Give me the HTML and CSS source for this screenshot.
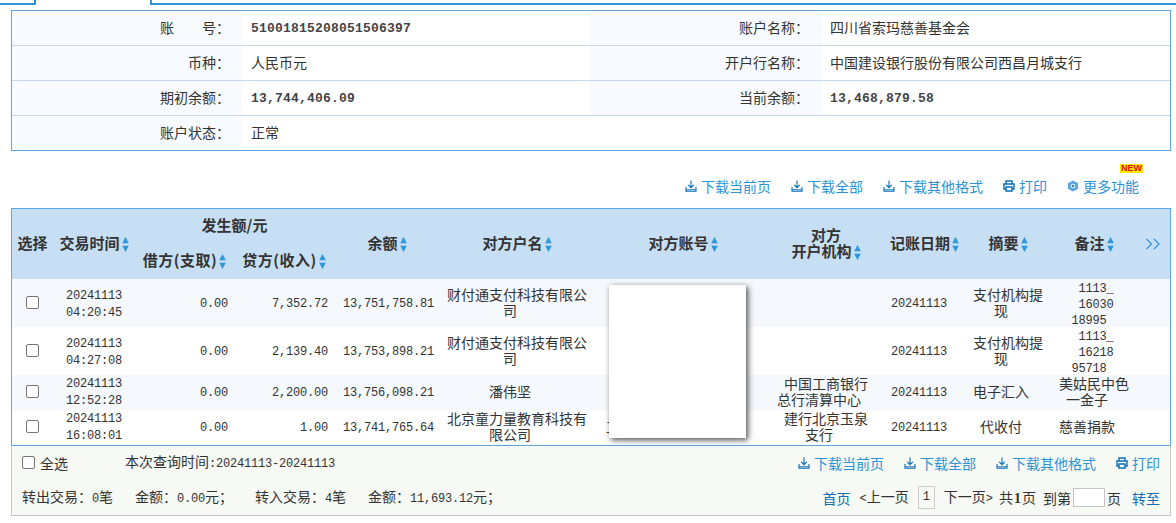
FILE: index.html
```html
<!DOCTYPE html>
<html lang="zh-CN">
<head>
<meta charset="utf-8">
<title>账户明细</title>
<link rel="stylesheet" href="styles.css">
</head>
<body>
<svg class="defs" width="0" height="0" aria-hidden="true">
  <symbol id="dl" viewBox="0 0 12 12"><path d="M6 .5v7M3.200 4.800 6 7.600l2.800-2.800M1 7v4.200h10V7" fill="none" stroke="#0a6db5" stroke-width="1.100"/><path d="M1 9.800h10" stroke="#0a6db5" stroke-width="1"/></symbol>
  <symbol id="pr" viewBox="0 0 12 12"><path d="M3 4V1h6v3M3 9H1V4h10v5H9M3 7h6v4H3z" fill="none" stroke="#0a6db5" stroke-width="1.400"/></symbol>
  <symbol id="gear" viewBox="0 0 12 12"><path d="M6 .5 11 3.200v5.600L6 11.500 1 8.800V3.200z" fill="#5aa5e0"/><circle cx="6" cy="6" r="2.300" fill="#e8f3fb"/><circle cx="6" cy="6" r="1.200" fill="#2a7fc0"/></symbol>
  <symbol id="sort" viewBox="0 0 7 15"><path d="M3.500 0 6.800 6.300H.2zM.2 8.700h6.600L3.500 15z" fill="#2e96dc"/></symbol>
  <symbol id="more" viewBox="0 0 16 12"><path d="M1.500 1 6.500 6l-5 5M9 1l5 5-5 5" fill="none" stroke="#2e96dc" stroke-width="1.200"/></symbol>
</svg>

<div class="tabs"><div class="tab-a"></div><div class="tab-on"></div><div class="tab-b"></div></div>

<div class="info">
  <div class="info-row">
    <div class="k">账&emsp;&emsp;号：</div><div class="v num">51001815208051506397</div>
    <div class="k k2">账户名称：</div><div class="v">四川省索玛慈善基金会</div>
  </div>
  <div class="info-row">
    <div class="k">币种：</div><div class="v">人民币元</div>
    <div class="k k2">开户行名称：</div><div class="v">中国建设银行股份有限公司西昌月城支行</div>
  </div>
  <div class="info-row">
    <div class="k">期初余额：</div><div class="v num">13,744,406.09</div>
    <div class="k k2">当前余额：</div><div class="v num">13,468,879.58</div>
  </div>
  <div class="info-row last">
    <div class="k">账户状态：</div><div class="v">正常</div>
    <div class="blank"></div>
  </div>
</div>

<div class="actions top">
  <a class="act"><svg class="ic"><use href="#dl"/></svg>下载当前页</a>
  <a class="act"><svg class="ic"><use href="#dl"/></svg>下载全部</a>
  <a class="act"><svg class="ic"><use href="#dl"/></svg>下载其他格式</a>
  <a class="act"><svg class="ic"><use href="#pr"/></svg>打印</a>
  <a class="act more"><svg class="ic"><use href="#gear"/></svg>更多功能<span class="new">NEW</span></a>
</div>

<div class="panel">
  <table class="grid">
    <colgroup>
      <col class="c1"><col class="c2"><col class="c3"><col class="c4"><col class="c5"><col class="c6"><col class="c7"><col class="c8"><col class="c9"><col class="c10"><col class="c11"><col class="c12">
    </colgroup>
    <thead>
      <tr class="h1">
        <th rowspan="2">选择</th>
        <th rowspan="2">交易时间<svg class="s"><use href="#sort"/></svg></th>
        <th colspan="2">发生额/元</th>
        <th rowspan="2">余额<svg class="s"><use href="#sort"/></svg></th>
        <th rowspan="2">对方户名<svg class="s"><use href="#sort"/></svg></th>
        <th rowspan="2">对方账号<svg class="s"><use href="#sort"/></svg></th>
        <th rowspan="2" class="stack">对方<br>开户机构<svg class="s"><use href="#sort"/></svg></th>
        <th rowspan="2" class="date-h">记账日期<svg class="s"><use href="#sort"/></svg></th>
        <th rowspan="2">摘要<svg class="s"><use href="#sort"/></svg></th>
        <th rowspan="2">备注<svg class="s"><use href="#sort"/></svg></th>
        <th rowspan="2" class="chev"><svg class="mr"><use href="#more"/></svg></th>
      </tr>
      <tr class="h2">
        <th class="amt">借方(支取)<svg class="s"><use href="#sort"/></svg></th>
        <th class="amt">贷方(收入)<svg class="s"><use href="#sort"/></svg></th>
      </tr>
    </thead>
    <tbody>
      <tr class="tall alt">
        <td class="pick"><span class="cb"></span></td>
        <td class="mono dt">20241113<br>04:20:45</td>
        <td class="mono r">0.00</td><td class="mono r">7,352.72</td><td class="mono r">13,751,758.81</td>
        <td class="wrap">财付通支付科技有限公司<span class="tail"></span></td><td></td><td></td>
        <td class="mono">20241113</td><td class="wrap2">支付机构提现<span class="tail"></span></td>
        <td class="mono"><div class="note">1113_<br>16030<br>18995&nbsp;&nbsp;</div></td><td></td>
      </tr>
      <tr class="tall">
        <td class="pick"><span class="cb"></span></td>
        <td class="mono dt">20241113<br>04:27:08</td>
        <td class="mono r">0.00</td><td class="mono r">2,139.40</td><td class="mono r">13,753,898.21</td>
        <td class="wrap">财付通支付科技有限公司<span class="tail"></span></td><td></td><td></td>
        <td class="mono">20241113</td><td class="wrap2">支付机构提现<span class="tail"></span></td>
        <td class="mono"><div class="note">1113_<br>16218<br>95718&nbsp;&nbsp;</div></td><td></td>
      </tr>
      <tr class="short alt">
        <td class="pick"><span class="cb"></span></td>
        <td class="mono dt">20241113<br>12:52:28</td>
        <td class="mono r">0.00</td><td class="mono r">2,200.00</td><td class="mono r">13,756,098.21</td>
        <td class="wrap">潘伟坚<span class="tail"></span></td><td></td><td>中国工商银行<br>总行清算中心<span class="tail"></span></td>
        <td class="mono">20241113</td><td class="wrap2">电子汇入<span class="tail"></span></td>
        <td>美姑民中色<br>一金子<span class="tail"></span></td><td></td>
      </tr>
      <tr class="short">
        <td class="pick"><span class="cb"></span></td>
        <td class="mono dt">20241113<br>16:08:01</td>
        <td class="mono r">0.00</td><td class="mono r">1.00</td><td class="mono r">13,741,765.64</td>
        <td class="wrap">北京童力量教育科技有限公司<span class="tail"></span></td><td class="peek">工</td><td>建行北京玉泉<br>支行<span class="tail"></span></td>
        <td class="mono">20241113</td><td class="wrap2">代收付<span class="tail"></span></td>
        <td>慈善捐款<span class="tail"></span></td><td></td>
      </tr>
    </tbody>
  </table>
  <div class="mask"></div>

  <div class="foot">
    <div class="foot-row first">
      <div class="foot-left">
        <label class="all"><span class="cb small"></span>全选</label>
        <span class="range">本次查询时间<span class="mono">:20241113-20241113</span></span>
      </div>
      <div class="actions">
        <a class="act"><svg class="ic"><use href="#dl"/></svg>下载当前页</a>
        <a class="act"><svg class="ic"><use href="#dl"/></svg>下载全部</a>
        <a class="act"><svg class="ic"><use href="#dl"/></svg>下载其他格式</a>
        <a class="act"><svg class="ic"><use href="#pr"/></svg>打印</a>
      </div>
    </div>
    <div class="foot-row second">
      <div class="stats">
        <span>转出交易：<span class="mono">0</span>笔</span>
        <span>金额：<span class="mono">0.00</span>元；</span>
        <span>转入交易：<span class="mono">4</span>笔</span>
        <span>金额：<span class="mono">11,693.12</span>元；</span>
      </div>
      <div class="pager">
        <a class="go">首页</a>
        <span class="prev"><span class="ang">&lt;</span>上一页</span>
        <span class="cur">1</span>
        <span class="next">下一页<span class="ang">&gt;</span></span>
        <span class="total">共<b class="bold1">1</b>页</span>
        <span class="to">到第<span class="inp"></span>页</span>
        <a class="go end">转至</a>
      </div>
    </div>
  </div>
</div>
</body>
</html>
```

FILE: styles.css
```css
* { box-sizing: border-box; }
html, body { margin: 0; padding: 0; }
body {
  width: 1176px;
  height: 523px;
  overflow: hidden;
  background: #fff;
  color: #333;
  font: 14px/16px "Noto Sans CJK SC", "Liberation Sans", sans-serif;
}
.defs { position: absolute; }

.tabs { display: flex; height: 5px; margin-bottom: 5px; }
.tab-a { width: 36px; border-bottom: 2px solid #2b93d9; border-right: 2px solid #2b93d9; }
.tab-on { width: 114px; }
.tab-b { flex: 1; border-bottom: 2px solid #2b93d9; border-left: 2px solid #2b93d9; }

.info { margin: 0 5px 0 11px; border: 1px solid #5aa9e6; height: 141px; }
.info-row { display: flex; height: 35px; border-bottom: 1px solid #c5d9ea; }
.info-row.last { border-bottom: 0; height: 34px; }
.k { width: 229px; flex: none; padding-right: 11px; background: #f7fbff; text-align: right; line-height: 32px; }
.k2 { width: 232px; padding-right: 13px; }
.v { flex: none; width: 349px; padding-left: 10px; line-height: 32px; }
.k2 + .v { width: auto; flex: 1; padding-left: 8px; }
.k2 + .v.num, .v.num { font: bold 13px/36px "Liberation Mono", monospace; letter-spacing: .2px; color: #444; }
.blank { flex: 1; }

.actions { display: flex; gap: 20px; color: #2c93d6; }
.actions.top { justify-content: flex-end; margin: 25px 37px 0 0; height: 20px; }
.act { display: flex; align-items: center; color: #2c93d6; position: relative; white-space: nowrap; line-height: 20px; }
.ic { width: 12px; height: 12px; margin-right: 4px; flex: none; }
.new {
  position: absolute; right: -4px; top: -12px; background: #ffe600; color: #e0120c;
  font: bold 9px/9px "Liberation Sans", sans-serif; padding: 0 1px;
}

.panel { position: relative; margin: 12px 5px 0 11px; border: 1px solid #5aa9e6; border-bottom: 0; }
.grid { width: 100%; border-collapse: collapse; table-layout: fixed; }
.c1 { width: 41px; } .c2 { width: 82px; } .c3 { width: 99px; } .c4 { width: 100px; }
.c5 { width: 106px; } .c6 { width: 154px; } .c7 { width: 178px; } .c8 { width: 108px; }
.c9 { width: 78px; } .c10 { width: 100px; } .c11 { width: 72px; } .c12 { width: 40px; }
.grid th { background: #c7dff5; color: #333; font-weight: 700; font-size: 15px; line-height: 16px; padding: 0 0 2px; text-align: center; white-space: nowrap; }
.grid th.date-h { padding-left: 10px; }
.grid th.amt { letter-spacing: .5px; }
.h1 { height: 34px; } .h2 { height: 36px; }
.grid td { padding: 0 0 3px; text-align: center; vertical-align: middle; color: #333; }
.grid td.wrap { padding: 0 7px 3px; }
.grid td.wrap2 { padding: 0 15px 3px; }
.tail { display: inline-block; width: 14px; }
.grid td.r { text-align: right; padding: 2px 6px 0 0; }
.mono, .grid td.mono { font: 12px/16px "Liberation Mono", monospace; letter-spacing: -.2px; color: #333; padding-top: 1px; padding-bottom: 0; }
.grid td.dt { line-height: 17px; padding: 1px 0 0; }
.grid .tall td.dt { padding-top: 4px; }
.note { padding: 2px 0 0 4px; margin-bottom: -2px; }
.grid td.mono:has(.note) { padding: 0; }
.alt td { background: #f5f9fd; }
.tall { height: 48px; } .short { height: 35px; }
.s { display: inline-block; width: 7px; height: 15px; margin-left: 2px; vertical-align: -3px; }
.mr { display: inline-block; width: 16px; height: 12px; margin-left: 6px; vertical-align: -1px; }
.grid td.peek { text-align: left; padding-left: 12px; }
.grid td.pick { padding-bottom: 5px; }
.cb { display: inline-block; width: 13px; height: 13px; border: 1px solid #767676; border-radius: 2px; background: #fff; vertical-align: middle; }

.mask { position: absolute; left: 597px; top: 76px; width: 137px; height: 153px; background: #fff; box-shadow: 2px 2px 6px rgba(0,0,0,.7); }

.foot { height: 71px; margin: 0 -1px; background: #f6f9f4; border: 1px solid #c4c8c4; border-top-color: #5aa9e6; padding: 0 10px; }
.foot-row { display: flex; justify-content: space-between; align-items: center; }
.first { height: 33px; }
.second { height: 37px; }
.foot-left { display: flex; align-items: center; }
.all { display: flex; align-items: center; gap: 5px; width: 103px; }
.stats { display: flex; gap: 22px; }
.pager { display: flex; align-items: center; }
.go { color: #0a6db5; }
.ang { font: 12px/16px "Liberation Mono", monospace; }
.prev { margin-left: 9px; }
.cur { width: 17px; height: 23px; margin-left: 9px; border: 1px solid #ccc; text-align: center; line-height: 21px; font-family: "Liberation Mono", monospace; font-size: 12px; }
.next { margin-left: 9px; }
.total { margin-left: 6px; }
.bold1 { font: bold 14px/16px "Liberation Serif", serif; margin: 0 1px; }
.to { display: flex; align-items: center; margin-left: 7px; }
.inp { width: 32px; height: 19px; margin: 0 2px; background: #fff; border: 1px solid #c4c4c4; }
.end { margin-left: 11px; }
```
